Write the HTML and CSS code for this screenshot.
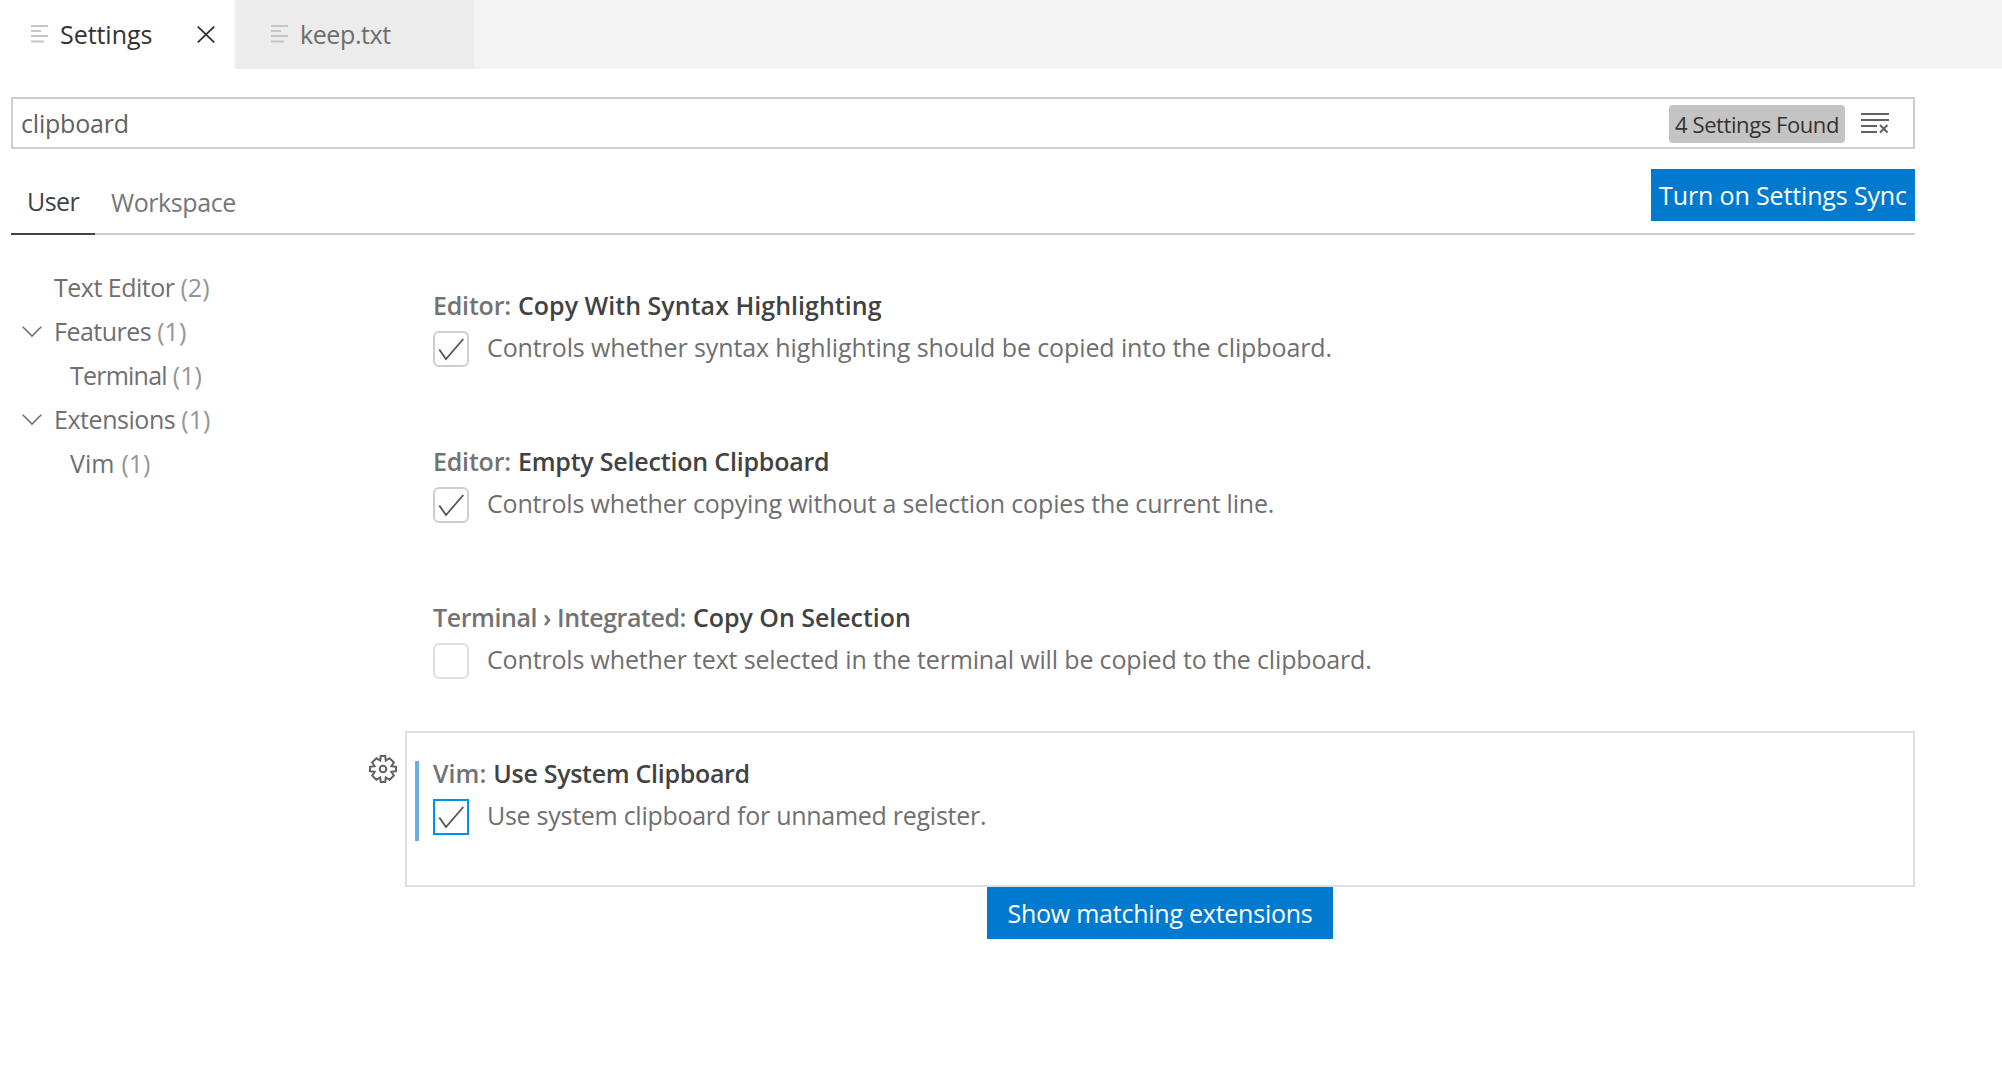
FILE: index.html
```html
<!DOCTYPE html>
<html lang="en">
<head>
<meta charset="utf-8">
<title>Settings</title>
<link rel="stylesheet" href="styles.css">
</head>
<body>
<header class="tabs">
  <div class="tab tab-active">
    <svg class="file-icon" width="18" height="18" viewBox="0 0 18 18"><path d="M0 1h17M0 6h10M0 11h17M0 16.500h13"/></svg>
    <span class="t t-settings">Settings</span>
    <svg class="close" width="18" height="17" viewBox="0 0 18 17"><path d="M.8.6l16.400 15.800M17.200.6L.8 16.400"/></svg>
  </div>
  <div class="tab tab-idle">
    <svg class="file-icon" width="18" height="18" viewBox="0 0 18 18"><path d="M0 1h17M0 6h10M0 11h17M0 16.500h13"/></svg>
    <span class="t t-keep">keep.txt</span>
  </div>
</header>
<main class="page">
  <div class="search">
    <span class="t t-query">clipboard</span>
    <span class="badge"><span class="t t-found">4 Settings Found</span></span>
    <svg class="clear" width="28" height="22" viewBox="0 0 28 22"><path d="M0 2h28M0 8h28M0 14h16M0 20h16"/><path d="M19 13l7.500 7.500M26.500 13L19 20.500"/></svg>
  </div>
  <div class="scopes">
    <div class="scope scope-active"><span class="t t-user">User</span></div>
    <div class="scope"><span class="t t-workspace">Workspace</span></div>
    <button class="button sync"><span class="t t-sync">Turn on Settings Sync</span></button>
  </div>
  <div class="body">
    <nav class="tree">
      <div class="row"><span class="t t-text-editor">Text Editor</span><span class="t count">(2)</span></div>
      <div class="row"><svg class="chevron" width="20" height="12" viewBox="0 0 20 12"><path d="M.7 .7L10 10 19.300 .7"/></svg><span class="t t-features">Features</span><span class="t count">(1)</span></div>
      <div class="row child"><span class="t t-terminal">Terminal</span><span class="t count">(1)</span></div>
      <div class="row"><svg class="chevron" width="20" height="12" viewBox="0 0 20 12"><path d="M.7 .7L10 10 19.300 .7"/></svg><span class="t t-extensions">Extensions</span><span class="t count">(1)</span></div>
      <div class="row child"><span class="t t-vim">Vim</span><span class="t count">(1)</span></div>
    </nav>
    <section class="list">
      <article class="item">
        <h2 class="title"><span class="t category t-c1">Editor:</span><span class="t t-n1">Copy With Syntax Highlighting</span></h2>
        <div class="setting"><span class="check"><svg width="36" height="36" viewBox="0 0 36 36"><path d="M6.300 18.500L13 28 30.300 8"/></svg></span><span class="t t-d1">Controls whether syntax highlighting should be copied into the clipboard.</span></div>
      </article>
      <article class="item">
        <h2 class="title"><span class="t category t-c1">Editor:</span><span class="t t-n2">Empty Selection Clipboard</span></h2>
        <div class="setting"><span class="check"><svg width="36" height="36" viewBox="0 0 36 36"><path d="M6.300 18.500L13 28 30.300 8"/></svg></span><span class="t t-d2">Controls whether copying without a selection copies the current line.</span></div>
      </article>
      <article class="item">
        <h2 class="title"><span class="t category t-c3">Terminal › Integrated:</span><span class="t t-n3">Copy On Selection</span></h2>
        <div class="setting"><span class="check check-empty"></span><span class="t t-d3">Controls whether text selected in the terminal will be copied to the clipboard.</span></div>
      </article>
      <div class="focused">
        <svg class="gear" width="28" height="28" viewBox="0 0 28 28"><path d="M11.800 1h4.400l.6 4.600L20.600 3.200 24.800 7.400 22.400 11.200 27 11.800v4.400l-4.600.6 2.400 3.800-4.200 4.200-3.800-2.400-.6 4.600h-4.400l-.6-4.600-3.800 2.400-4.200-4.200 2.400-3.800L1 16.200v-4.400l4.600-.6L3.200 7.400l4.200-4.200 3.800 2.400z"/><circle cx="14" cy="14" r="3.300"/></svg>
        <article class="item item-focused">
          <div class="modified">
            <h2 class="title"><span class="t category t-c4">Vim:</span><span class="t t-n4">Use System Clipboard</span></h2>
            <div class="setting"><span class="check check-focused"><svg width="36" height="36" viewBox="0 0 36 36"><path d="M6.300 18.500L13 28 30.300 8"/></svg></span><span class="t t-d4">Use system clipboard for unnamed register.</span></div>
          </div>
        </article>
      </div>
      <button class="button more"><span class="t t-more">Show matching extensions</span></button>
    </section>
  </div>
</main>
</body>
</html>
```
FILE: styles.css
```css
* { box-sizing: border-box; }
body {
  margin: 0;
  background: #fff;
  color: #6f6f6f;
  font: 25px/34px "Open Sans", "Noto Sans", sans-serif;
}
svg { display: block; flex: none; fill: none; }
.t { white-space: nowrap; }

.tabs { display: flex; gap: 2px; height: 69px; background: #f3f3f3; }
.tab { display: flex; align-items: center; height: 69px; padding: 0 0 2px 31px; }
.tab-active { width: 234px; background: #fff; color: #333; }
.tab-idle { width: 238px; padding-left: 35px; background: #ececec; color: #6e6e6e; }
.file-icon { margin-right: 11px; stroke: #c5c5c5; stroke-width: 2; }
.close { margin-top: 1px; margin-left: auto; margin-right: 19px; stroke: #333; stroke-width: 1.800; }

.page { padding: 28px 87px 0 11px; }
.search {
  display: flex;
  align-items: center;
  height: 52px;
  padding: 0 24px 0 8px;
  border: 2px solid #cecece;
  color: #616161;
}
.badge {
  display: flex;
  justify-content: center;
  width: 176px;
  height: 38px;
  margin: 2px 16px 0 auto;
  border-radius: 4px;
  background: #c4c4c4;
  color: #333;
  font-size: 22px;
  line-height: 38px;
}
.clear { stroke: #616161; stroke-width: 2; }

.scopes { display: flex; height: 86px; border-bottom: 2px solid #cecece; }
.scope { height: 86px; padding: 36px 16px 0; color: #767676; }
.scope-active { width: 84px; padding-top: 35px; border-bottom: 2px solid #424242; color: #424242; }
.button {
  display: flex;
  align-items: center;
  justify-content: center;
  height: 52px;
  padding: 0;
  border: 0;
  background: #007acf;
  color: #fff;
  font: inherit;
}
.sync { width: 264px; margin: 20px 0 0 auto; }

.body { display: flex; padding-top: 28px; }
.tree { width: 358px; padding-top: 2px; }
.row { display: flex; align-items: center; height: 44px; padding-left: 43px; }
.child { padding-left: 59px; }
.chevron { margin: 2px 12px 0 -32px; stroke: #6f6f6f; stroke-width: 1.600; }
.count { margin-left: 6px; color: #959595; }

.list { flex: 1; }
.item { height: 156px; margin-left: 36px; padding: 25px 0 0 28px; }
.title { display: flex; height: 34px; margin: 0; color: #424242; font-size: 25px; font-weight: 600; }
.category { margin-right: 7px; color: #737373; }
.setting { display: flex; gap: 18px; margin-top: 9px; line-height: 33px; }
.check { width: 36px; height: 36px; border: 2px solid #cecece; border-radius: 6px; }
.check svg { margin: -2px; stroke: #555; stroke-width: 1.800; }
.check-empty { border-color: #dedede; }
.check-focused { border-color: #0090f1; border-radius: 0; }
.focused { display: flex; }
.gear { margin-top: 24px; margin-right: 8px; stroke: #616161; stroke-width: 2; }
.item-focused { flex: 1; margin-left: 0; padding: 28px 0 0 8px; border: 2px solid #dfdfdf; }
.modified { display: flow-root; height: 80px; padding-left: 14px; border-left: 4px solid #66afe0; }
.modified .title { margin-top: -5px; }
.more { width: 346px; margin-left: 618px; }

/* Tracking per label */
.t-settings { letter-spacing: -.05px; }
.t-keep { letter-spacing: -.4px; }
.t-query { letter-spacing: -.2px; }
.t-found { letter-spacing: -.42px; }
.t-user { letter-spacing: -.6px; }
.t-workspace { letter-spacing: -.42px; }
.t-sync { letter-spacing: -.14px; }
.t-text-editor { letter-spacing: -.5px; }
.t-features { letter-spacing: -.5px; }
.t-terminal { letter-spacing: -.78px; }
.t-extensions { letter-spacing: -.45px; }
.t-vim { margin-right: 1px; }
.t-c1 { letter-spacing: -.2px; }
.t-c3 { letter-spacing: -.43px; }
.t-n1 { letter-spacing: .03px; }
.t-n2 { letter-spacing: -.2px; }
.t-n3 { letter-spacing: -.05px; }
.t-n4 { letter-spacing: -.3px; }
.t-d1 { letter-spacing: -.105px; }
.t-d2 { letter-spacing: -.165px; }
.t-d3 { letter-spacing: -.16px; }
.t-d4 { letter-spacing: -.27px; }
.t-more { letter-spacing: -.24px; }
```
